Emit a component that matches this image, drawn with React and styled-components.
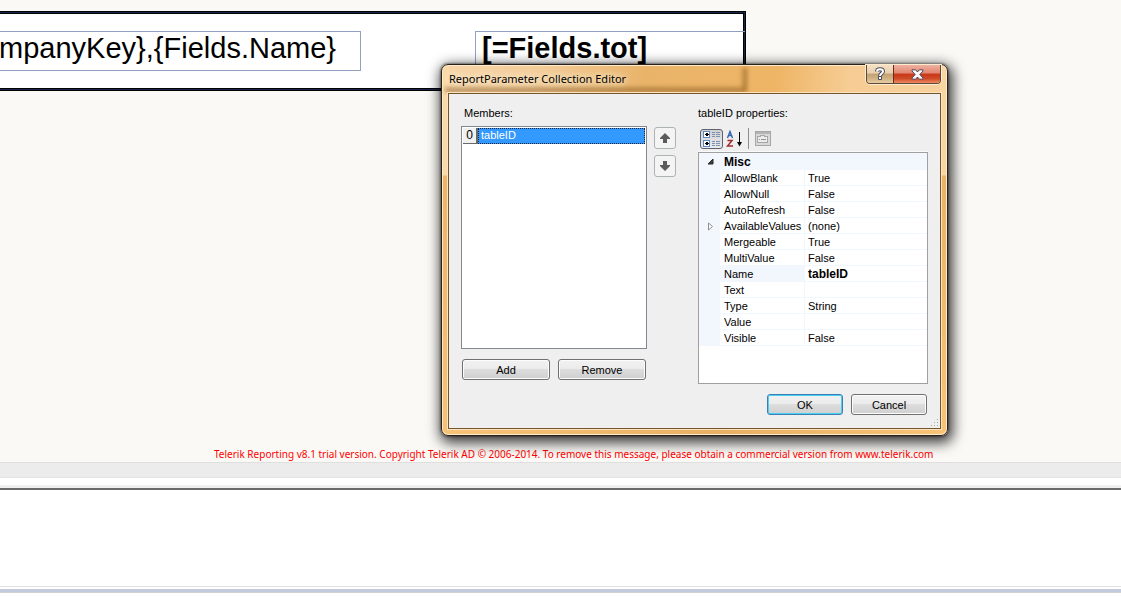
import React, { useState } from 'react';
import styled, { createGlobalStyle, css } from 'styled-components';

const GlobalStyle = createGlobalStyle`
  * {
    box-sizing: border-box;
  }
  body {
    margin: 0;
    background: #fff;
    color: #000;
    font-family: "Liberation Sans", Arial, sans-serif;
    font-size: 11px;
  }
`;

const Screen = styled.div`
  position: relative;
  display: flex;
  flex-direction: column;
  min-height: 100vh;
  overflow: hidden;
`;

/* report designer */

const Designer = styled.main`
  display: flex;
  flex-direction: column;
  height: 462px;
  padding-top: 11px;
  background: #fbf9f5;
`;

const DetailBand = styled.section`
  display: flex;
  align-items: flex-start;
  justify-content: space-between;
  height: 80px;
  margin: 0 375px 0 -3px;
  padding: 19px 0 0 2px;
  background: #fff;
  border: 1px solid #000;
  box-shadow: inset 0 0 0 1px #14264a, inset 0 0 0 2px #000;
`;

const ReportItem = styled.div`
  display: flex;
  align-items: center;
  justify-content: ${props => props.$end ? 'flex-end' : 'flex-start'};
  width: ${props => props.$end ? '361px' : '270px'};
  height: 40px;
  padding: ${props => props.$end ? '0 24px 6px 0' : '0 0 6px 6px'};
  border: 1px solid #93a0c4;
  border-left-width: ${props => props.$end ? '0' : '1px'};
  border-right-width: ${props => props.$end ? '1px' : '0'};
  font-size: 29px;
  line-height: 32px;
  font-weight: ${props => props.$end ? 'normal' : 'bold'};
  white-space: nowrap;
`;

const TrialNotice = styled.p`
  margin: auto 0 0;
  padding: 0 0 0 214px;
  color: #f00;
  font-family: "Noto Sans", "Open Sans", sans-serif;
  font-size: 10px;
  line-height: 16px;
  white-space: nowrap;
`;

const ScrollTrack = styled.div`
  height: 16px;
  background: #ececec;
  border-top: 1px solid #dfdfdf;
  border-bottom: 1px solid #e4e4e4;
`;

const Splitter = styled.div`
  height: 12px;
  background: linear-gradient(#fff 7px, #f0f0f0 7px);
  border-bottom: 2px solid #6b6b6b;
`;

const OutputPane = styled.div`
  flex: 1;
  background: #fff;
`;

const StatusEdge = styled.div`
  height: 10px;
  background: linear-gradient(#e0e1e8 1px, #fff 1px, #fff 3px, #c3cade 3px, #c3cade 6px, #d2d2d6 6px, #d2d2d6 7px, #fff 7px);
`;

/* dialog window */

const Window = styled.div`
  position: absolute;
  top: 64px;
  left: 441px;
  isolation: isolate;
  width: 507px;
  padding: 0 6px 6px;
  border: 1px solid #2b2118;
  border-radius: 7px;
  background:
    linear-gradient(#fbd9a6 0, #fbd9a6 110px, #eeb566 111px, #f7c274 100%) left / 7px 100% no-repeat,
    linear-gradient(#f9d5a1 0, #f9d5a1 110px, #e9b264 111px, #f9c477 100%) right / 7px 100% no-repeat,
    linear-gradient(100deg, #f7d5a8 0, #f3cc98 20%, #e9b46a 40%, #eeb566 66%, #f6cc93 80%, #f7d19d 100%) top / 100% 30px no-repeat,
    linear-gradient(90deg, #f8c378, #e7b065 55%, #f9c477) bottom / 100% 7px no-repeat;
  box-shadow:
    inset 0 0 0 1px #fdebcf,
    0 0 2px 1px rgba(0, 0, 0, 0.35),
    2px 4px 13px 3px rgba(0, 0, 0, 0.75);

  /* edge of the report band seen through the glass title bar */
  &::before {
    content: "";
    position: absolute;
    z-index: -1;
    top: 3px;
    left: 3px;
    width: 302px;
    height: 24px;
    box-shadow: inset -4px -4px 3px rgba(120, 74, 16, 0.6);
    filter: blur(2px);
  }
`;

const TitleBar = styled.header`
  display: flex;
  align-items: flex-start;
  justify-content: space-between;
  height: 28px;
`;

const Title = styled.h1`
  margin: 0;
  padding: 5px 1px;
  font-family: "Noto Sans", "Open Sans", sans-serif;
  font-size: 11px;
  line-height: 18px;
  font-weight: normal;
  text-shadow: 0 0 6px #fff3dc, 0 0 10px #fff3dc;
`;

const CaptionButtons = styled.div`
  display: flex;
  border: 1px solid #5b4a3a;
  border-top: 0;
  border-radius: 0 0 4px 4px;
  box-shadow: 0 0 0 1px #fdebcf;
  overflow: hidden;
`;

const CaptionButton = styled.button`
  display: flex;
  align-items: center;
  justify-content: center;
  width: ${props => props.$close ? '47px' : '26px'};
  height: 18px;
  padding: 0;
  border: 0;
  ${props => props.$close ? css`
    border-left: 1px solid #6e2a1c;
    background: linear-gradient(#f0b1a0 0, #e08670 45%, #c9371a 50%, #cf4a26 75%, #ee8a62 100%);
  ` : css`
    background: linear-gradient(#f5e0c4 0, #e9cfae 45%, #c3a273 50%, #d0b284 75%, #e5cca2 100%);
  `}
`;

const Client = styled.div`
  position: relative;
  display: grid;
  grid-template-columns: 186px 22px 1fr;
  padding: 12px 12px 13px;
  background: #efefef;
  border: 1px solid #75562c;
  box-shadow: 0 0 0 1px #fbe3c0;
`;

const Column = styled.div`
  display: flex;
  flex-direction: column;
  margin-left: ${props => props.$gap || 0}px;
`;

const MoveButtons = styled.div`
  display: flex;
  flex-direction: column;
  gap: 6px;
  width: 22px;
  margin: 21px 0 0 7px;
`;

const FieldLabel = styled.span`
  padding-left: ${props => props.$indent || 0}px;
  line-height: 14px;
`;

const MemberList = styled.ul`
  height: 223px;
  margin: 6px 0 10px;
  padding: 1px;
  list-style: none;
  background: #fff;
  border: 1px solid #828790;
`;

const Member = styled.li`
  display: flex;
  height: 16px;
  line-height: 15px;
`;

const MemberIndex = styled.span`
  width: 15px;
  background: #f0f0f0;
  border-right: 2px solid #696969;
  border-bottom: 1px solid #696969;
  font-size: 12px;
  text-align: center;
`;

const MemberName = styled.span`
  flex: 1;
  padding-left: 2px;
  background: #3399ff;
  border: 1px dotted #14223a;
  color: #fff;
  line-height: 13px;
`;

const ButtonRow = styled.div`
  display: flex;
  justify-content: ${props => props.$end ? 'flex-end' : 'flex-start'};
  gap: 8px;
  padding: 0 1px;
`;

const Button = styled.button`
  width: ${props => props.$wide ? '88px' : '76px'};
  height: 21px;
  padding: 0;
  border: 1px solid #707070;
  border-radius: 3px;
  background: linear-gradient(#f2f2f2 0, #ebebeb 48%, #dddddd 50%, #cfcfcf 100%);
  box-shadow: inset 0 0 0 1px #fcfcfc;
  color: #000;
  font: 11px/18px "Liberation Sans", Arial, sans-serif;
  ${props => props.$primary && css`
    border-color: #3c7fb1;
    box-shadow: inset 0 0 0 1px #48d1f5;
  `}
`;

const MoveButton = styled.button`
  display: flex;
  align-items: center;
  justify-content: center;
  width: 22px;
  height: 22px;
  padding: 0;
  border: 1px solid #adb2b5;
  border-radius: 3px;
  background: #f4f4f4;
`;

/* property grid */

const Toolbar = styled.div`
  display: flex;
  align-items: center;
  height: 32px;
  padding: 6px 2px 0;
  border-bottom: 1px solid #fafafa;
`;

const ToolButton = styled.button`
  display: flex;
  align-items: center;
  justify-content: center;
  width: 23px;
  height: 20px;
  padding: 0;
  border: 1px solid ${props => props.$active ? '#5f646b' : 'transparent'};
  border-radius: 3px;
  background: ${props => props.$active ? 'linear-gradient(#cfd1d4, #e9ebee)' : 'none'};
`;

const Divider = styled.span`
  width: 1px;
  height: 21px;
  margin: 0 2px;
  background: #8d8d8d;
`;

const GridBox = styled.div`
  height: 232px;
  background: #fff;
  border: 1px solid #a0a0a0;
`;

const PropertyTable = styled.table`
  width: 100%;
  table-layout: fixed;
  border-collapse: separate;
  border-spacing: 0;
`;

const Col = styled.col`
  width: ${props => props.$width}px;
`;

const Gutter = styled.td`
  padding: 0 0 0 2px;
  background: #f2f6fd;
  text-align: center;
  line-height: 0;
`;

const Category = styled.th`
  height: 17px;
  padding: 1px 4px 0;
  background: #f2f6fd;
  font-size: 12px;
  line-height: 16px;
  text-align: left;
`;

const PropertyName = styled.th`
  height: 16px;
  padding: 2px 0 0 4px;
  background: ${props => props.$selected ? '#f2f6fd' : '#fff'};
  border-right: 1px solid #f2f6fd;
  border-bottom: 1px solid #f2f6fd;
  font-weight: normal;
  line-height: 13px;
  text-align: left;
  white-space: nowrap;
`;

const PropertyValue = styled.td`
  height: 16px;
  padding: 2px 0 0 3px;
  border-bottom: 1px solid #f2f6fd;
  font-size: ${props => props.$changed ? '12px' : '11px'};
  font-weight: ${props => props.$changed ? 'bold' : 'normal'};
  line-height: 13px;
`;

const DialogButtons = styled(ButtonRow)`
  margin-top: 10px;
`;

const Grip = styled.svg`
  position: absolute;
  right: 1px;
  bottom: 1px;
`;

const CategorizedIcon = () => (
  <svg width="19" height="16" viewBox="0 0 19 16" shapeRendering="crispEdges">
    <rect x="1.5" y="0.5" width="6" height="6" rx="1" fill="#fff" stroke="#5f87bd" />
    <rect x="1.5" y="9.5" width="6" height="6" rx="1" fill="#fff" stroke="#5f87bd" />
    <path d="M3 3h4v1H3zM4 2h2v3H4zM3 12h4v1H3zM4 11h2v3H4z" fill="#000" />
    <path d="M10 1h3v1h-3zM14 1h4v1h-4zM10 3h3v1h-3zM14 3h4v1h-4zM10 5h3v1h-3zM14 5h4v1h-4zM10 10h3v1h-3zM14 10h4v1h-4zM10 12h3v1h-3zM14 12h4v1h-4zM10 14h3v1h-3zM14 14h4v1h-4z" fill="#8091ad" />
  </svg>
);

const SortIcon = () => (
  <svg width="18" height="18" viewBox="0 0 18 18" fill="none">
    <path d="M1.500 8L4 1.500L6.500 8M2.500 5.500h3.500" stroke="#3562ae" strokeWidth="1.400" />
    <path d="M1.500 10.500h4.500L1.500 16h5.500" stroke="#a52a2a" strokeWidth="1.500" />
    <path d="M13.500 2v13" stroke="#000" />
    <path d="M11 12h5l-2.500 4.500z" fill="#000" />
  </svg>
);

const PagesIcon = () => (
  <svg width="16" height="15" viewBox="0 0 16 15" fill="none" shapeRendering="crispEdges">
    <rect x="0.500" y="0.500" width="15" height="14" fill="#d9d9d9" stroke="#a6a6a6" />
    <path d="M1 2h14" stroke="#b4b4b4" strokeWidth="2" />
    <path d="M2.500 6.500V11.500h10V5.500h-3v-1h-4v1h-3z" fill="#ececec" stroke="#a6a6a6" />
    <path d="M4 8.500h1M6 8.500h5" stroke="#949494" />
  </svg>
);

const ArrowIcon = ({ down }) => (
  <svg width="12" height="12" viewBox="0 0 12 12">
    <path
      d={down ? 'M4 1h4v4h3v1L6 11 1 6V5h3z' : 'M4 11h4V7h3V6L6 1 1 6v1h3z'}
      fill="#5c5c5c"
    />
  </svg>
);

const HelpIcon = () => (
  <svg width="12" height="14" viewBox="0 0 12 14" fill="none">
    <path d="M3 4.500C3 1.500 9 1.500 9 4.500C9 6.500 6 6.500 6 9" stroke="#4d4d5c" strokeWidth="4" />
    <rect x="4" y="9" width="4" height="4" rx="1" fill="#4d4d5c" />
    <path d="M3 4.500C3 1.500 9 1.500 9 4.500C9 6.500 6 6.500 6 9" stroke="#fff" strokeWidth="2" />
    <rect x="5" y="10" width="2" height="2" fill="#fff" />
  </svg>
);

const CloseIcon = () => (
  <svg width="13" height="11" viewBox="0 0 13 11">
    <path
      d="M1 .8h3.600L6.500 3 8.400.8H12v1.200L8.800 5.500 12 9v1.200H8.400L6.500 8 4.600 10.200H1V9l3.200-3.500L1 2z"
      fill="#f8f8f8"
      stroke="#54485a"
    />
  </svg>
);

const properties = [
  { name: 'AllowBlank', value: 'True' },
  { name: 'AllowNull', value: 'False' },
  { name: 'AutoRefresh', value: 'False' },
  { name: 'AvailableValues', value: '(none)', expandable: true },
  { name: 'Mergeable', value: 'True' },
  { name: 'MultiValue', value: 'False' },
  { name: 'Name', value: 'tableID', changed: true },
  { name: 'Text', value: '' },
  { name: 'Type', value: 'String' },
  { name: 'Value', value: '' },
  { name: 'Visible', value: 'False' }
];

const PropertyGrid = () => {
  const [selected, setSelected] = useState('Name');

  return (
    <GridBox>
      <PropertyTable aria-labelledby="properties-label">
        <colgroup>
          <Col $width={21} />
          <Col $width={85} />
          <col />
        </colgroup>
        <tbody>
          <tr>
            <Gutter>
              <svg width="7" height="7" viewBox="0 0 7 7">
                <path d="M6 1v5H1z" fill="#404040" stroke="#262626" />
              </svg>
            </Gutter>
            <Category colSpan={2}>Misc</Category>
          </tr>
          {properties.map(({ name, value, changed, expandable }) => (
            <tr key={name} onClick={() => setSelected(name)}>
              <Gutter>
                {expandable && (
                  <svg width="7" height="9" viewBox="0 0 7 9">
                    <path d="M1.500 1v7L5.500 4.500z" fill="#fff" stroke="#8f8f8f" />
                  </svg>
                )}
              </Gutter>
              <PropertyName scope="row" $selected={name === selected}>{name}</PropertyName>
              <PropertyValue $changed={changed}>{value}</PropertyValue>
            </tr>
          ))}
        </tbody>
      </PropertyTable>
    </GridBox>
  );
};

const CollectionEditor = () => (
  <Window role="dialog" aria-labelledby="editor-title">
    <TitleBar>
      <Title id="editor-title">ReportParameter Collection Editor</Title>
      <CaptionButtons>
        <CaptionButton aria-label="Help"><HelpIcon /></CaptionButton>
        <CaptionButton $close aria-label="Close"><CloseIcon /></CaptionButton>
      </CaptionButtons>
    </TitleBar>
    <Client>
      <Column>
        <FieldLabel id="members-label" $indent={3}>Members:</FieldLabel>
        <MemberList aria-labelledby="members-label">
          <Member>
            <MemberIndex>0</MemberIndex>
            <MemberName>tableID</MemberName>
          </Member>
        </MemberList>
        <ButtonRow>
          <Button $wide>Add</Button>
          <Button $wide>Remove</Button>
        </ButtonRow>
      </Column>
      <MoveButtons>
        <MoveButton aria-label="Move up"><ArrowIcon /></MoveButton>
        <MoveButton aria-label="Move down"><ArrowIcon down /></MoveButton>
      </MoveButtons>
      <Column $gap={29}>
        <FieldLabel id="properties-label">tableID properties:</FieldLabel>
        <Toolbar>
          <ToolButton $active aria-label="Categorized"><CategorizedIcon /></ToolButton>
          <ToolButton aria-label="Alphabetical"><SortIcon /></ToolButton>
          <Divider />
          <ToolButton disabled aria-label="Property pages"><PagesIcon /></ToolButton>
        </Toolbar>
        <PropertyGrid />
        <DialogButtons $end>
          <Button $primary>OK</Button>
          <Button>Cancel</Button>
        </DialogButtons>
      </Column>
      <Grip width="9" height="9" viewBox="0 0 9 9" aria-hidden="true">
        <path
          d="M7 1h1v1H7zM7 4h1v1H7zM4 4h1v1H4zM7 7h1v1H7zM4 7h1v1H4zM1 7h1v1H1z"
          fill="#a8a8a8"
        />
      </Grip>
    </Client>
  </Window>
);

const App = () => (
  <Screen>
    <GlobalStyle />
    <Designer>
      <DetailBand>
        <ReportItem $end>mpanyKey{'}'},{'{'}Fields.Name{'}'}</ReportItem>
        <ReportItem>[=Fields.tot]</ReportItem>
      </DetailBand>
      <TrialNotice>
        Telerik Reporting v8.1 trial version. Copyright Telerik AD © 2006-2014. To remove this message, please obtain a commercial version from www.telerik.com
      </TrialNotice>
    </Designer>
    <ScrollTrack />
    <Splitter />
    <OutputPane />
    <StatusEdge />
    <CollectionEditor />
  </Screen>
);

export default App;
